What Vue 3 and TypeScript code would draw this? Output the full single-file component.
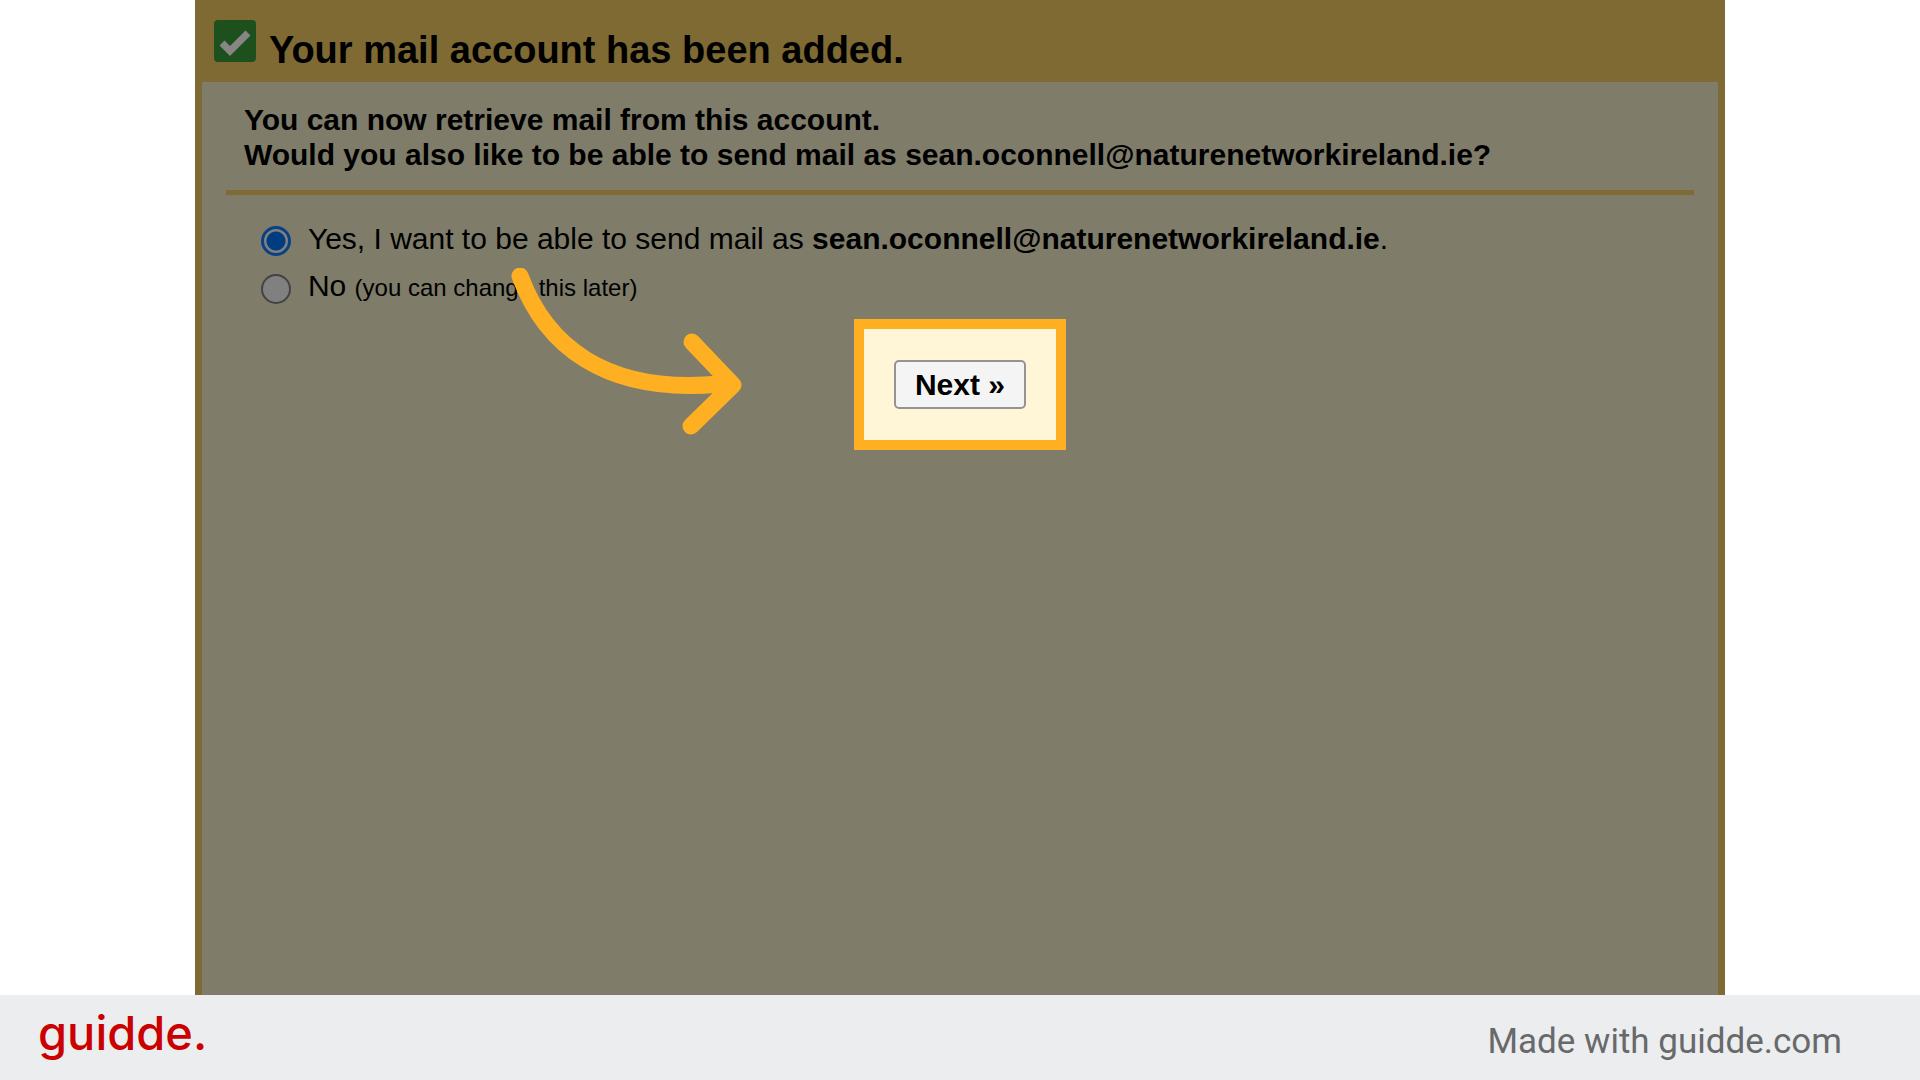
<script setup lang="ts">
import { ref } from 'vue'

const email = 'sean.oconnell@naturenetworkireland.ie'
const sendAs = ref<'yes' | 'no'>('yes')
</script>

<template>
  <div class="page">
    <main class="card">
      <header class="card-head">
        <svg class="check" viewBox="0 0 42 42" aria-hidden="true">
          <rect width="42" height="42" rx="4" fill="#1d501c" />
          <path d="M8 23l8 8L34 13" fill="none" stroke="#868686" stroke-width="7" />
        </svg>
        <h1>Your mail account has been added.</h1>
      </header>
      <form class="card-body" @submit.prevent>
        <div class="intro">
          <p>You can now retrieve mail from this account.</p>
          <p>Would you also like to be able to send mail as {{ email }}?</p>
        </div>
        <div class="options">
          <label class="option">
            <input v-model="sendAs" type="radio" name="send-as" value="yes" />
            <span>Yes, I want to be able to send mail as <b>{{ email }}</b>.</span>
          </label>
          <label class="option">
            <input v-model="sendAs" type="radio" name="send-as" value="no" />
            <span>No <small>(you can change this later)</small></span>
          </label>
        </div>
        <div class="spotlight">
          <button type="submit">Next »</button>
          <svg class="arrow" viewBox="0 0 240 170" aria-hidden="true">
            <g fill="none" stroke="#ffb022" stroke-linecap="round" stroke-linejoin="round">
              <path d="M10 8C35 76 94 127 210 116" stroke-width="17" />
              <path d="M182 74L223 117L181 158" stroke-width="17" />
            </g>
          </svg>
        </div>
      </form>
    </main>
    <footer class="footer">
      <span class="brand">guidde.</span>
      <span class="made">Made with guidde.com</span>
    </footer>
  </div>
</template>

<style>
body {
  margin: 0;
  background: #fff;
}
</style>

<style scoped>
.page {
  display: flex;
  flex-direction: column;
  min-height: 100vh;
  font-family: "Liberation Sans", Arial, sans-serif;
  color: #000;
}

.card {
  display: flex;
  flex: 1;
  flex-direction: column;
  box-sizing: border-box;
  width: 79.7%;
  margin: 0 auto;
  padding: 0 7px;
  background: #7e6a32;
}

.card-head {
  display: flex;
  align-items: flex-start;
  gap: 13px;
  height: 82px;
  padding-left: 12px;
}

.check {
  width: 42px;
  height: 42px;
  margin-top: 20px;
}

h1 {
  margin: 28px 0 0;
  font-size: 38px;
  line-height: 44px;
}

.card-body {
  flex: 1;
  padding: 0 24px;
  background: #7f7c6a;
}

.intro {
  padding: 20px 18px 18px;
  border-bottom: 5px solid #7e6a32;
  font-size: 30px;
  font-weight: 700;
  line-height: 35px;
}

p {
  margin: 0;
}

.options {
  padding: 20px 35px 0;
}

.option {
  display: flex;
  align-items: center;
  gap: 17px;
  height: 48px;
  font-size: 30px;
  line-height: 48px;
}

small {
  font-size: 24px;
}

input {
  appearance: none;
  box-sizing: border-box;
  width: 30px;
  height: 30px;
  margin: 4px 0 0;
  border: 2px solid #434343;
  border-radius: 50%;
  background: #808080;
}

input:checked {
  border: 3px solid #0a4184;
  background: radial-gradient(circle, #003c80 9px, #808080 10px);
}

.spotlight {
  position: relative;
  box-sizing: border-box;
  width: fit-content;
  margin: 8px auto 0;
  padding: 31px 30px;
  border: 10px solid #ffb022;
  background: #fff5d7;
}

button {
  display: block;
  box-sizing: border-box;
  width: 132px;
  height: 49px;
  padding: 0;
  border: 2px solid #939393;
  border-radius: 5px;
  background: #f4f4f4;
  color: #000;
  font: 700 30px "Liberation Sans", Arial, sans-serif;
}

.arrow {
  position: absolute;
  top: -61px;
  left: -354px;
  width: 240px;
  height: 170px;
}

.footer {
  display: flex;
  align-items: center;
  justify-content: space-between;
  box-sizing: border-box;
  height: 85px;
  padding: 0 78px 0 38px;
  background: #ecedef;
}

.brand {
  padding-bottom: 10px;
  color: #cb0000;
  font: 500 47px/60px Inter, sans-serif;
}

.made {
  padding-top: 8px;
  color: #67696b;
  font: 400 35px/42px Roboto, sans-serif;
}
</style>
